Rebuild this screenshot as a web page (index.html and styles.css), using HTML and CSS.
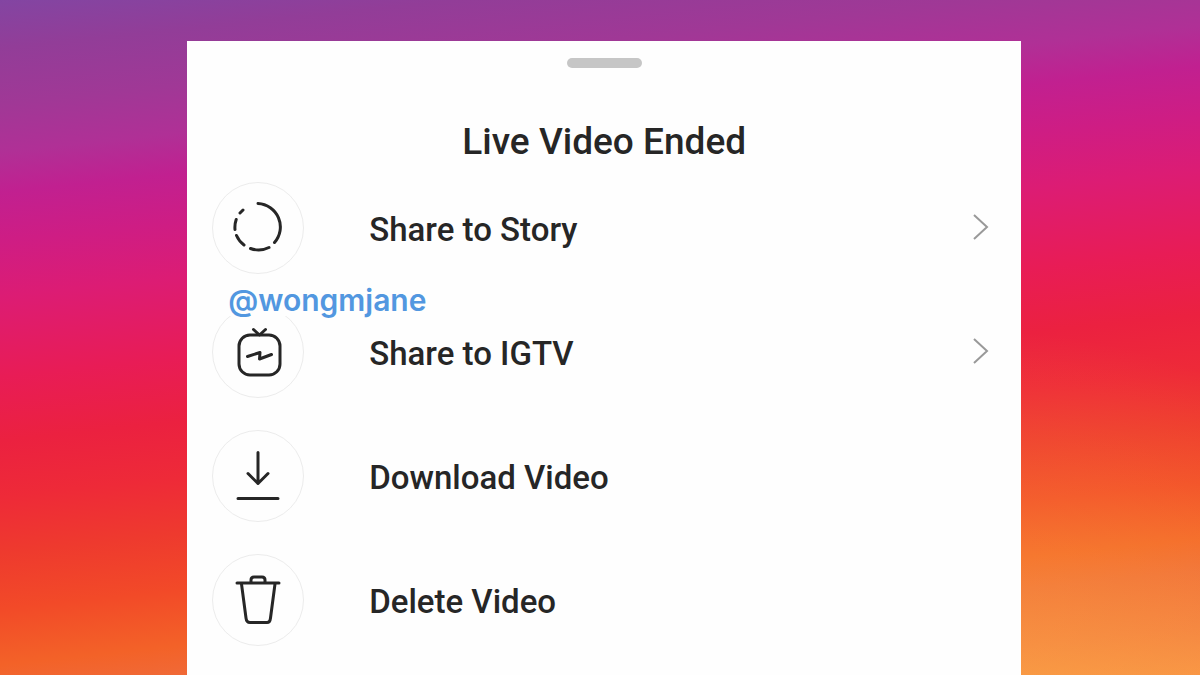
FILE: index.html
```html
<!DOCTYPE html>
<html lang="en">
<head>
    <meta charset="utf-8">
    <meta name="viewport" content="width=device-width, initial-scale=1">
    <title>Live Video Ended</title>
    <link rel="stylesheet" href="styles.css">
</head>
<body>
    <main class="sheet">
        <div class="handle"></div>
        <h1 class="title">Live Video Ended</h1>
        <ul class="options">
            <li>
                <button class="option" type="button">
                    <span class="icon">
                        <svg viewBox="0 0 90 90" aria-hidden="true">
                            <path d="M45 20.500A23.500 23.500 0 0 1 61.500 59.500M56 64.500A23.500 23.500 0 0 1 37.500 65.500M31 62A23.500 23.500 0 0 1 23.500 52.500M22 46.500A23.500 23.500 0 0 1 23.200 36.500M27 30L30 27"/>
                        </svg>
                    </span>
                    <span class="label">Share to Story</span>
                    <svg class="chevron" viewBox="0 0 18 28" aria-hidden="true"><path d="M3 1L16 13L3 25"/></svg>
                </button>
            </li>
            <li class="tagged">
                <a class="credit" href="#">@wongmjane</a>
                <button class="option" type="button">
                    <span class="icon">
                        <svg viewBox="0 0 90 90" aria-hidden="true">
                            <rect x="26" y="28" width="41" height="40" rx="11"/>
                            <path d="M40.500 22.500L46.500 28L52.500 22.500M34.500 49.500L47 45.500L46.500 52L58.500 47.500"/>
                        </svg>
                    </span>
                    <span class="label">Share to IGTV</span>
                    <svg class="chevron" viewBox="0 0 18 28" aria-hidden="true"><path d="M3 1L16 13L3 25"/></svg>
                </button>
            </li>
            <li>
                <button class="option" type="button">
                    <span class="icon">
                        <svg viewBox="0 0 90 90" aria-hidden="true">
                            <path d="M45 21.500V52.500M35 42.500L45 52.500L55 42.500M25 67.500H65"/>
                        </svg>
                    </span>
                    <span class="label">Download Video</span>
                </button>
            </li>
            <li>
                <button class="option" type="button">
                    <span class="icon">
                        <svg viewBox="0 0 90 90" aria-hidden="true">
                            <path d="M24 28H66M38 27V25Q38 22 41 22H49Q52 22 52 25V27M28.500 29L33 63Q33.500 67.500 37 67.500H54Q57 67.500 57.500 63L62 29"/>
                        </svg>
                    </span>
                    <span class="label">Delete Video</span>
                </button>
            </li>
        </ul>
    </main>
</body>
</html>
```
FILE: styles.css
```css
* {
    box-sizing: border-box;
}

body {
    margin: 0;
    min-height: 100vh;
    padding: 41px 14.9% 0 15.6%;
    display: flex;
    font-family: Roboto, sans-serif;
    color: #262626;
    background:
        radial-gradient(ellipse 40% 55% at 82% 104%, rgba(255, 190, 70, 0.4), rgba(255, 170, 60, 0)),
        linear-gradient(174deg, #8345a2 0%, #923d98 6%, #a03896 13%, #b03096 19%, #c12090 24%, #ce1d84 30%, #dc1c74 37%, #e81c56 47%, #eb2140 55%, #ee2a38 62%, #ee3a2e 69%, #f24a28 76%, #f36228 83%, #f06a38 87%, #f37a40 94%, #f78c45 100%);
}

.sheet {
    flex: 1;
    padding: 17px 25px 0;
    background: #fefefe;
}

.handle {
    width: 75px;
    height: 10px;
    margin: 0 auto;
    border-radius: 5px;
    background: #c6c6c6;
}

.title {
    margin: 50px 0 16px;
    font-size: 37px;
    line-height: 48px;
    font-weight: 500;
    text-align: center;
}

.options {
    margin: 0;
    padding: 0;
    list-style: none;
    display: grid;
    gap: 32px;
}

.option {
    width: 100%;
    padding: 0 7px 0 0;
    display: flex;
    align-items: center;
    border: none;
    background: none;
    font: inherit;
    color: inherit;
    text-align: left;
    cursor: pointer;
}

.icon {
    width: 92px;
    height: 92px;
    border: 1px solid #ececec;
    border-radius: 50%;
}

.icon svg {
    display: block;
    fill: none;
    stroke: #262626;
    stroke-width: 3;
    stroke-linecap: round;
    stroke-linejoin: round;
}

.label {
    flex: 1;
    margin-left: 65px;
    padding-top: 4px;
    font-size: 33px;
    line-height: 40px;
    font-weight: 500;
}

.chevron {
    width: 18px;
    height: 28px;
    fill: none;
    stroke: #999;
    stroke-width: 2;
}

.tagged {
    position: relative;
}

/* watermark sits over the top of the icon circle */
.credit {
    position: absolute;
    top: -22px;
    left: 16px;
    background: #fefefe;
    font-family: Inter, sans-serif;
    font-size: 30px;
    line-height: 32px;
    font-weight: 600;
    color: #5297e0;
    text-decoration: none;
}
```
